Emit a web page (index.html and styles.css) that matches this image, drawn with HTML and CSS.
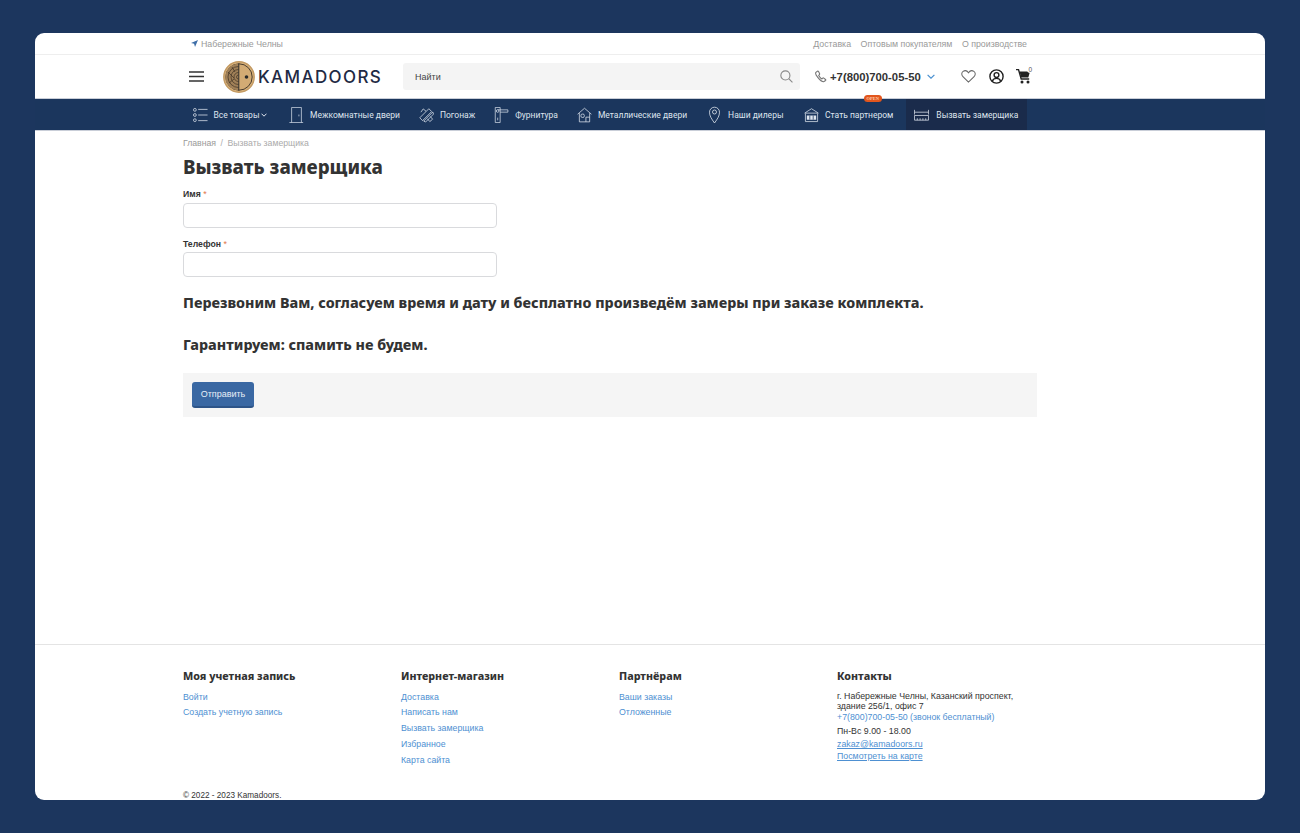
FILE: index.html
```html
<!DOCTYPE html>
<html lang="ru">
<head>
<meta charset="utf-8">
<title>Вызвать замерщика</title>
<link rel="stylesheet" href="styles.css">
</head>
<body>
<div class="shell">
  <div class="topbar">
    <div class="wrap topbar-row">
      <a class="city"><svg class="city-ic" viewBox="0 0 8 8"><path d="M8 0 0 3.4l3.5 1L4.6 8z"/></svg>Набережные Челны</a>
      <div class="toplinks"><a>Доставка</a><a>Оптовым покупателям</a><a>О производстве</a></div>
    </div>
  </div>
  <header class="head wrap">
    <svg class="burger" viewBox="0 0 15 11"><path d="M0 1h15M0 5.5h15M0 10h15"/></svg>
    <svg class="logo-ic" viewBox="0 0 32 32">
      <circle cx="16" cy="16" r="15.2" fill="#d8b27c" stroke="#c39a63" stroke-width="1.4"/>
      <circle cx="16" cy="16" r="13.2" fill="#d3ab74" stroke="#3a3026" stroke-width=".9"/>
      <path d="M15.5 2.8a13.2 13.2 0 0 0 0 26.400z" fill="#a08058"/>
      <g fill="none" stroke="#3d3024" stroke-width=".7">
        <path d="M15.500 5.500a10.500 10.500 0 0 0 0 21M15.500 8.500a7.500 7.500 0 0 0 0 15M15.500 11.500a4.500 4.500 0 0 0 0 9M15.500 14a2 2 0 0 0 0 4M5 11l6 6M6 22l5-4M9 6l3 5"/>
      </g>
      <path d="M15.800 2.500v27" stroke="#2a2a2a" stroke-width="1"/>
      <circle cx="23.500" cy="16" r="1.800" fill="#2a2a2a"/>
    </svg>
    <span class="logo-text">KAMADOORS</span>
    <form class="search">
      <span class="search-ph">Найти</span>
      <svg class="search-ic" viewBox="0 0 14 14"><circle cx="5.800" cy="5.800" r="4.900"/><path d="m9.400 9.400 4 4"/></svg>
    </form>
    <svg class="phone-ic" viewBox="0 0 13 13"><path d="M2.600.8 1 2c-.6.6-.3 2.600 2 5.500 2.500 3.200 5 4.800 6.400 4.700l2-1.400c.4-.4.300-.8 0-1.100L9.500 8.300c-.4-.3-.8-.3-1.100 0l-.9.900C6.500 8.900 4.300 6.300 4 5.300l.8-.9c.3-.3.300-.7.100-1.100L3.700.9C3.400.5 3 .5 2.600.8z"/></svg>
    <span class="phone">+7(800)700-05-50</span>
    <svg class="phone-chev" viewBox="0 0 8 5"><path d="m.6.8 3.400 3.400L7.400.8"/></svg>
    <svg class="heart-ic" viewBox="0 0 16 14"><path d="M8 13 2 7.200C.2 5.400.4 2.700 2.200 1.500 4 .3 6.500.8 8 3c1.500-2.200 4-2.700 5.800-1.500 1.800 1.200 2 3.900.2 5.700z"/></svg>
    <svg class="user-ic" viewBox="0 0 15 15"><circle cx="7.500" cy="7.500" r="6.600"/><circle cx="7.500" cy="6" r="2.400"/><path d="M3.300 12.200c.8-2 2.400-2.800 4.200-2.800s3.400.8 4.200 2.800"/></svg>
    <div class="cart">
      <svg class="cart-ic" viewBox="0 0 15 15"><path d="M0 .6h2.500l2.700 9.400h8" fill="none" stroke="#222" stroke-width="1.400"/><path d="M3.500 2.500H14l-1.700 6H5.200z" fill="#222"/><circle cx="6" cy="13" r="1.500" fill="#222"/><circle cx="12" cy="13" r="1.500" fill="#222"/></svg>
      <span class="cart-count">0</span>
    </div>
  </header>
  <nav class="nav">
    <ul class="wrap nav-list">
      <li class="nav-item"><svg class="nav-ic" viewBox="0 0 16 16"><circle cx="2" cy="2.500" r="1.500"/><circle cx="2" cy="8" r="1.500"/><circle cx="2" cy="13.500" r="1.500"/><path d="M5.500 2h10M5.500 8h10M5.500 14h10"/></svg><span>Все товары</span><svg class="nav-chev" viewBox="0 0 6 4"><path d="m.5.700 2.500 2.500L5.500.700"/></svg></li>
      <li class="nav-item nav-door"><svg class="nav-ic" viewBox="0 0 16 18"><path d="M0 17.500h15.500M2.500 17.500V.5h11v17M10.700 8.500v2"/></svg><span>Межкомнатные двери</span></li>
      <li class="nav-item"><svg class="nav-ic" viewBox="0 0 16 16"><path d="M.8 11 10.500 1.300l3 3L3.800 14zM5 14.500 14.700 4.800l.8 2.200L7 15.500zM2 5l2.500-3.500 3 2.500M9 12l2.500 3 3-2.500-2.500-3"/></svg><span>Погонаж</span></li>
      <li class="nav-item"><svg class="nav-ic" viewBox="0 0 16 18"><path d="M1 .5h5.500v17H1zM3.700 3.200h11.500v2.600H6.500M3.700 12v3"/><circle cx="3.700" cy="4.500" r="1.500"/></svg><span>Фурнитура</span></li>
      <li class="nav-item"><svg class="nav-ic" viewBox="0 0 16 16"><path d="M.6 7.200 8 .8l7.400 6.400M2.500 6v9.300h11V6M9.500 15.300v-5h4"/><rect x="4.200" y="7" width="3.600" height="3.600" rx="1.400"/></svg><span>Металлические двери</span></li>
      <li class="nav-item nav-pin"><svg class="nav-ic nav-ic-pin" viewBox="0 0 12 18"><path d="M6 17C3 12.800 1 10 1 6.200a5 5 0 0 1 10 0C11 10 9 12.800 6 17z"/><circle cx="6" cy="6" r="2"/></svg><span>Наши дилеры</span></li>
      <li class="nav-item nav-partner"><svg class="nav-ic" viewBox="0 0 16 15"><path d="M.6 5.500 8 .8l7.400 4.700M2 5.500h12M1.500 5.500v9h13v-9"/><path class="sign" d="M3 8h10v4.500H3z"/><path class="sign-gap" d="M6.200 8v4.500M9.800 8v4.500"/></svg><span>Стать партнером</span><b class="badge">OPEN</b></li>
      <li class="nav-item nav-active"><svg class="nav-ic" viewBox="0 0 16 12"><path d="M.5.500v5M15.500.500v5M.5 3h15M.5 6.500h15v5H.5zM3.500 9.500v2M6.500 9.500v2M9.500 9.500v2M12.500 9.500v2"/></svg><span>Вызвать замерщика</span></li>
    </ul>
  </nav>
  <main class="main wrap">
    <div class="crumbs"><a>Главная</a><i>/</i><span>Вызвать замерщика</span></div>
    <h1 class="title">Вызвать замерщика</h1>
    <form class="form">
      <label class="label">Имя <em>*</em></label>
      <input class="input" type="text">
      <label class="label label-2">Телефон <em>*</em></label>
      <input class="input" type="tel">
      <h3 class="note">Перезвоним Вам, согласуем время и дату и бесплатно произведём замеры при заказе комплекта.</h3>
      <h3 class="note note-2">Гарантируем: спамить не будем.</h3>
      <div class="actions"><button class="btn" type="button">Отправить</button></div>
    </form>
  </main>
  <footer class="foot">
    <div class="wrap foot-grid">
      <div><h4 class="foot-h">Моя учетная запись</h4><ul class="foot-list"><li>Войти</li><li>Создать учетную запись</li></ul></div>
      <div><h4 class="foot-h">Интернет-магазин</h4><ul class="foot-list"><li>Доставка</li><li>Написать нам</li><li>Вызвать замерщика</li><li>Избранное</li><li>Карта сайта</li></ul></div>
      <div><h4 class="foot-h">Партнёрам</h4><ul class="foot-list"><li>Ваши заказы</li><li>Отложенные</li></ul></div>
      <div><h4 class="foot-h">Контакты</h4>
        <div class="contacts">
          <p class="addr">г. Набережные Челны, Казанский проспект, здание 256/1, офис 7</p>
          <p class="tel">+7(800)700-05-50 (звонок бесплатный)</p>
          <p class="hours">Пн-Вс 9.00 - 18.00</p>
          <p class="mail">zakaz@kamadoors.ru</p>
          <p class="map">Посмотреть на карте</p>
        </div>
      </div>
    </div>
    <p class="wrap copy">© 2022 - 2023 Kamadoors.</p>
  </footer>
</div>
</body>
</html>
```
FILE: styles.css
```css
* { box-sizing: border-box; }
html, body { margin: 0; height: 100%; }
body {
  background: #1c365e;
  padding: 33px 35px;
  font-family: "Liberation Sans", Arial, sans-serif;
  font-size: 8.800px;
  color: #333;
  overflow: hidden;
}
ul { list-style: none; margin: 0; padding: 0; }
p, h1, h3, h4 { margin: 0; }
.shell {
  height: 767px;
  background: #fff;
  border-radius: 9px;
  overflow: hidden;
  display: flex;
  flex-direction: column;
}
.wrap { width: 854px; margin-left: 148px; }

.topbar { height: 22px; border-bottom: 1px solid #eee; }
.topbar-row { display: flex; justify-content: space-between; align-items: center; height: 21px; padding: 0 10px 0 8px; color: #999; font-size: 8.800px; }
.city { display: flex; align-items: center; }
.city-ic { width: 7px; height: 7px; fill: #3f6fa8; margin-right: 3px; }
.toplinks { display: flex; gap: 9.500px; }

.head { display: flex; align-items: center; height: 43px; }
.burger { width: 15px; height: 11px; margin-left: 6px; stroke: #333; stroke-width: 1.600; fill: none; }
.logo-ic { width: 32px; height: 32px; margin-left: 19px; }
.logo-text { margin-left: 3px; width: 145px; font-family: Inter, sans-serif; font-size: 17px; letter-spacing: 1.400px; font-weight: 500; color: #1f2a44; }
.search { width: 397px; height: 27px; background: #f4f4f4; border-radius: 3px; display: flex; align-items: center; justify-content: space-between; padding: 0 7px 0 12px; }
.search-ph { color: #444; font-size: 9px; }
.search-ic { width: 13px; height: 13px; fill: none; stroke: #888; stroke-width: 1.200; }
.phone-ic { width: 12px; height: 13px; margin-left: 15px; fill: none; stroke: #777; stroke-width: 1.200; }
.phone { margin-left: 3px; font-size: 11.300px; font-weight: 700; color: #333; }
.phone-chev { width: 8px; height: 5px; margin-left: 6px; fill: none; stroke: #4a90d0; stroke-width: 1.200; }
.heart-ic { width: 15px; height: 13px; margin-left: 26px; fill: none; stroke: #666; stroke-width: 1.100; }
.user-ic { width: 15px; height: 15px; margin-left: 13px; fill: none; stroke: #222; stroke-width: 1.400; }
.cart { position: relative; margin-left: 12px; width: 16px; height: 15px; }
.cart-ic { display: block; width: 15px; height: 15px; }
.cart-count { position: absolute; top: -3px; right: -2px; width: 7px; height: 7px; border-radius: 50%; background: #fff; font-size: 6.500px; line-height: 7px; text-align: center; color: #555; }

.nav { height: 33px; background: #1b365d; border-top: 1px solid #c9ced8; border-bottom: 1px solid #c9ced8; }
.nav-list { display: flex; height: 31px; }
.nav-item { position: relative; display: flex; align-items: center; gap: 6px; padding: 0 9.500px; color: #dfe5ee; font-family: Roboto, sans-serif; font-size: 8.500px; white-space: nowrap; }
.nav-door { padding-left: 12px; }
.nav-pin { padding-left: 10.500px; padding-right: 11px; }
.nav-partner { padding-right: 13px; }
.nav-ic { width: 15px; height: 16px; fill: none; stroke: #dfe6ef; stroke-width: .8; }
.nav-ic-pin { width: 15px; height: 18px; }
.sign { fill: #dfe6ef; stroke: none; }
.sign-gap { stroke: #1b365d; }
.nav-chev { width: 6px; height: 4px; margin-left: -4px; fill: none; stroke: #dfe6ef; stroke-width: 1; }
.nav-active { background: #1a2b4b; padding: 0 9px 0 8px; }
.nav-active .nav-ic { margin-right: 1px; }
.badge { position: absolute; top: -4px; left: 69px; height: 7px; padding: 0 3px; border-radius: 4px; background: #e2561d; color: #ffcdb0; font: 700 4.500px/7px "Liberation Serif", serif; }

.main { flex: 1; }
.crumbs { display: flex; gap: 4.500px; padding-top: 7px; line-height: 11px; color: #aaa; font-size: 8.700px; }
.crumbs a { color: #999; }
.crumbs i { font-style: normal; }
.title { margin-top: 6px; font-family: "Noto Sans", sans-serif; font-size: 18.700px; font-weight: 800; line-height: 24px; color: #333; }
.form { display: flex; flex-direction: column; align-items: flex-start; margin-top: 10px; }
.label { font-weight: 700; font-size: 8.700px; line-height: 11px; }
.label em { color: #e2774a; font-style: normal; font-weight: 400; }
.label-2 { margin-top: 11px; margin-bottom: 2px; }
.input { width: 314px; height: 25px; margin-top: 3px; border: 1px solid #d9dadd; border-radius: 4px; background: #fff; }
.label-2 + .input { margin-top: 0; }
.note { font-family: "Noto Sans", sans-serif; font-size: 14.300px; font-weight: 800; line-height: 20px; color: #333; margin-top: 16px; }
.note-2 { margin-top: 22px; }
.actions { width: 854px; margin-top: 18px; height: 44px; padding: 9px; background: #f5f5f5; }
.btn { display: block; width: 62px; height: 26px; padding: 0; border: 0; border-bottom: 2px solid #2d5488; border-radius: 3px; background: #3a68a3; color: #e8eef6; font: 9px "Liberation Sans", Arial, sans-serif; }

.foot { height: 156px; border-top: 1px solid #e4e4e4; }
.foot-grid { display: grid; grid-template-columns: repeat(4, 218px); height: 145px; padding-top: 24px; }
.foot-h { font-family: "Noto Sans", sans-serif; font-size: 10.700px; font-weight: 800; line-height: 14px; color: #333; }
.foot-list { margin-top: 6.500px; color: #4e90d2; line-height: 15.750px; }
.contacts { margin-top: 6px; color: #333; }
.addr { width: 185px; line-height: 9.500px; padding-top: 3px; }
.tel { color: #4e90d2; line-height: 12px; }
.hours { margin-top: 2px; line-height: 12px; }
.mail, .map { color: #4e90d2; text-decoration: underline; line-height: 12px; }
.mail { margin-top: 1px; }
.copy { line-height: 12px; font-size: 8.200px; }
```
